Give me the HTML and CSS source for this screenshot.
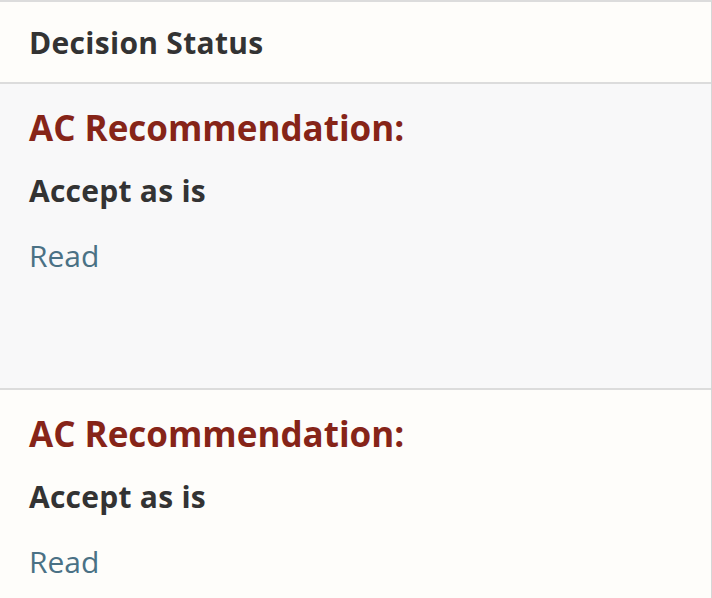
FILE: index.html
```html
<!DOCTYPE html>
<html>
<head>
<meta charset="utf-8">
<link rel="stylesheet" href="styles.css">
</head>
<body>
<div class="panel">
  <div class="panel-header">Decision Status</div>
  <div class="section section-alt">
    <div class="rec-title">AC Recommendation:</div>
    <div class="rec-value">Accept as is</div>
    <a class="rec-link" href="#">Read</a>
  </div>
  <div class="section">
    <div class="rec-title">AC Recommendation:</div>
    <div class="rec-value">Accept as is</div>
    <a class="rec-link" href="#">Read</a>
  </div>
</div>
</body>
</html>
```

FILE: styles.css
```css
html, body {
  margin: 0;
  padding: 0;
  background: #fefdfa;
}
body {
  font-family: "Open Sans", "Liberation Sans", sans-serif;
  color: #333333;
}
.panel {
  border-top: 2px solid #dcdcdc;
  border-right: 1px solid #d6d6d6;
  height: 596px;
  overflow: hidden;
  background: #fefdfa;
}
.panel-header {
  height: 80px;
  padding-left: 29px;
  display: flex;
  align-items: center;
  font-size: 30px;
  font-weight: 700;
  letter-spacing: 0.3px;
  color: #333333;
  border-bottom: 2px solid #dcdcdc;
}
.panel-header::before {
  content: "";
  display: block;
  height: 0;
  margin-top: -2px;
}
.section {
  height: 304px;
  padding: 20px 29px 0 29px;
  box-sizing: border-box;
  display: flex;
  flex-direction: column;
  align-items: flex-start;
}
.section-alt {
  background: #f8f8f9;
  height: 306px;
  border-bottom: 2px solid #dcdcdc;
}
.rec-title {
  font-size: 35px;
  font-weight: 700;
  color: #862418;
  line-height: 48px;
}
.rec-value {
  margin-top: 17px;
  font-size: 30px;
  font-weight: 700;
  letter-spacing: 0.25px;
  color: #333333;
  line-height: 44px;
}
.rec-link {
  margin-top: 21px;
  font-size: 30px;
  color: #4a7185;
  text-decoration: none;
  line-height: 44px;
}
```
